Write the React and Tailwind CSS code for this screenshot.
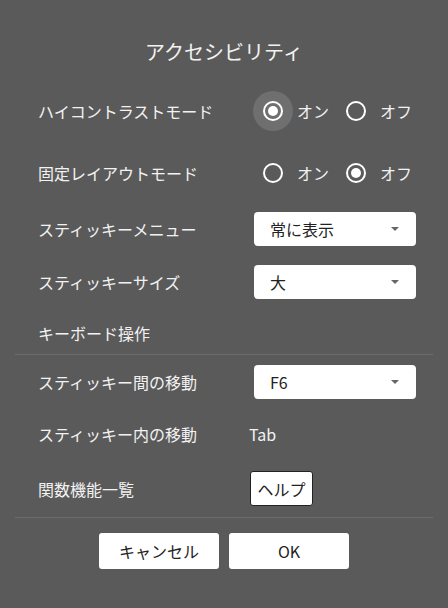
import { useState } from "react";

const font = { fontFamily: '"Noto Sans CJK JP", "Noto Sans", sans-serif' };

function Radio({ checked, hover }) {
  return (
    <span
      className={
        "w-[40px] h-[40px] shrink-0 rounded-full flex items-center justify-center " +
        (hover ? "bg-[#6f6f6f]" : "")
      }
    >
      <span className="w-[20px] h-[20px] rounded-full border-2 border-white flex items-center justify-center">
        {checked && <span className="w-[10px] h-[10px] rounded-full bg-white" />}
      </span>
    </span>
  );
}

function RadioPair({ value, hover }) {
  return (
    <div className="flex items-center ml-[-1px] shrink-0 whitespace-nowrap">
      <div className="flex items-center">
        <Radio checked={value === "on"} hover={hover} />
        <span className="ml-[4px] text-[16px]">オン</span>
      </div>
      <div className="flex items-center ml-[7px]">
        <Radio checked={value === "off"} />
        <span className="ml-[4px] text-[16px]">オフ</span>
      </div>
    </div>
  );
}

function Select({ value }) {
  return (
    <div className="w-[162px] h-[34px] shrink-0 bg-white rounded-[4px] flex items-center justify-between pl-[16px] pr-[17px] text-[#222] text-[16px]">
      <span>{value}</span>
      <svg width="8" height="4" viewBox="0 0 8 4">
        <path d="M0 0 L8 0 L4 4 Z" fill="#666" />
      </svg>
    </div>
  );
}

function Row({ h, label, children }) {
  return (
    <div className={"flex items-center pl-[23px] " + h}>
      <div className="w-[216px] shrink-0 whitespace-nowrap text-[16px]">{label}</div>
      {children}
    </div>
  );
}

export default function App() {
  const [contrast] = useState("on");
  const [fixed] = useState("off");

  return (
    <div
      className="w-[448px] h-[608px] bg-[#5a5a5a] text-[#f2f2f2] px-[15px] pt-[22px] leading-none"
      style={font}
    >
      <div className="h-[59px] flex items-center justify-center text-[20px]">
        アクセシビリティ
      </div>

      <Row h="h-[60px]" label="ハイコントラストモード">
        <RadioPair value={contrast} hover />
      </Row>
      <Row h="h-[64px]" label="固定レイアウトモード">
        <RadioPair value={fixed} />
      </Row>
      <Row h="h-[47px]" label="スティッキーメニュー">
        <Select value="常に表示" />
      </Row>
      <Row h="h-[60px]" label="スティッキーサイズ">
        <Select value="大" />
      </Row>
      <Row h="h-[42px]" label="キーボード操作" />

      <div className="h-px bg-[#6c6c6c]" />

      <Row h="h-[53px]" label="スティッキー間の移動">
        <Select value="F6" />
      </Row>
      <Row h="h-[52px]" label="スティッキー内の移動">
        <span className="text-[16px] ml-[-5px]">Tab</span>
      </Row>
      <Row h="h-[57px]" label="関数機能一覧">
        <button className="ml-[-4px] w-[63px] h-[35px] bg-white border border-[#222] rounded-[3px] text-[#222] text-[16px]">
          ヘルプ
        </button>
      </Row>

      <div className="h-px bg-[#6c6c6c]" />

      <div className="flex justify-center gap-[10px] pt-[15px]">
        <button className="w-[120px] h-[36px] bg-white rounded-[3px] text-[#222] text-[16px]">
          キャンセル
        </button>
        <button className="w-[120px] h-[36px] bg-white rounded-[3px] text-[#222] text-[16px]">
          OK
        </button>
      </div>
    </div>
  );
}
